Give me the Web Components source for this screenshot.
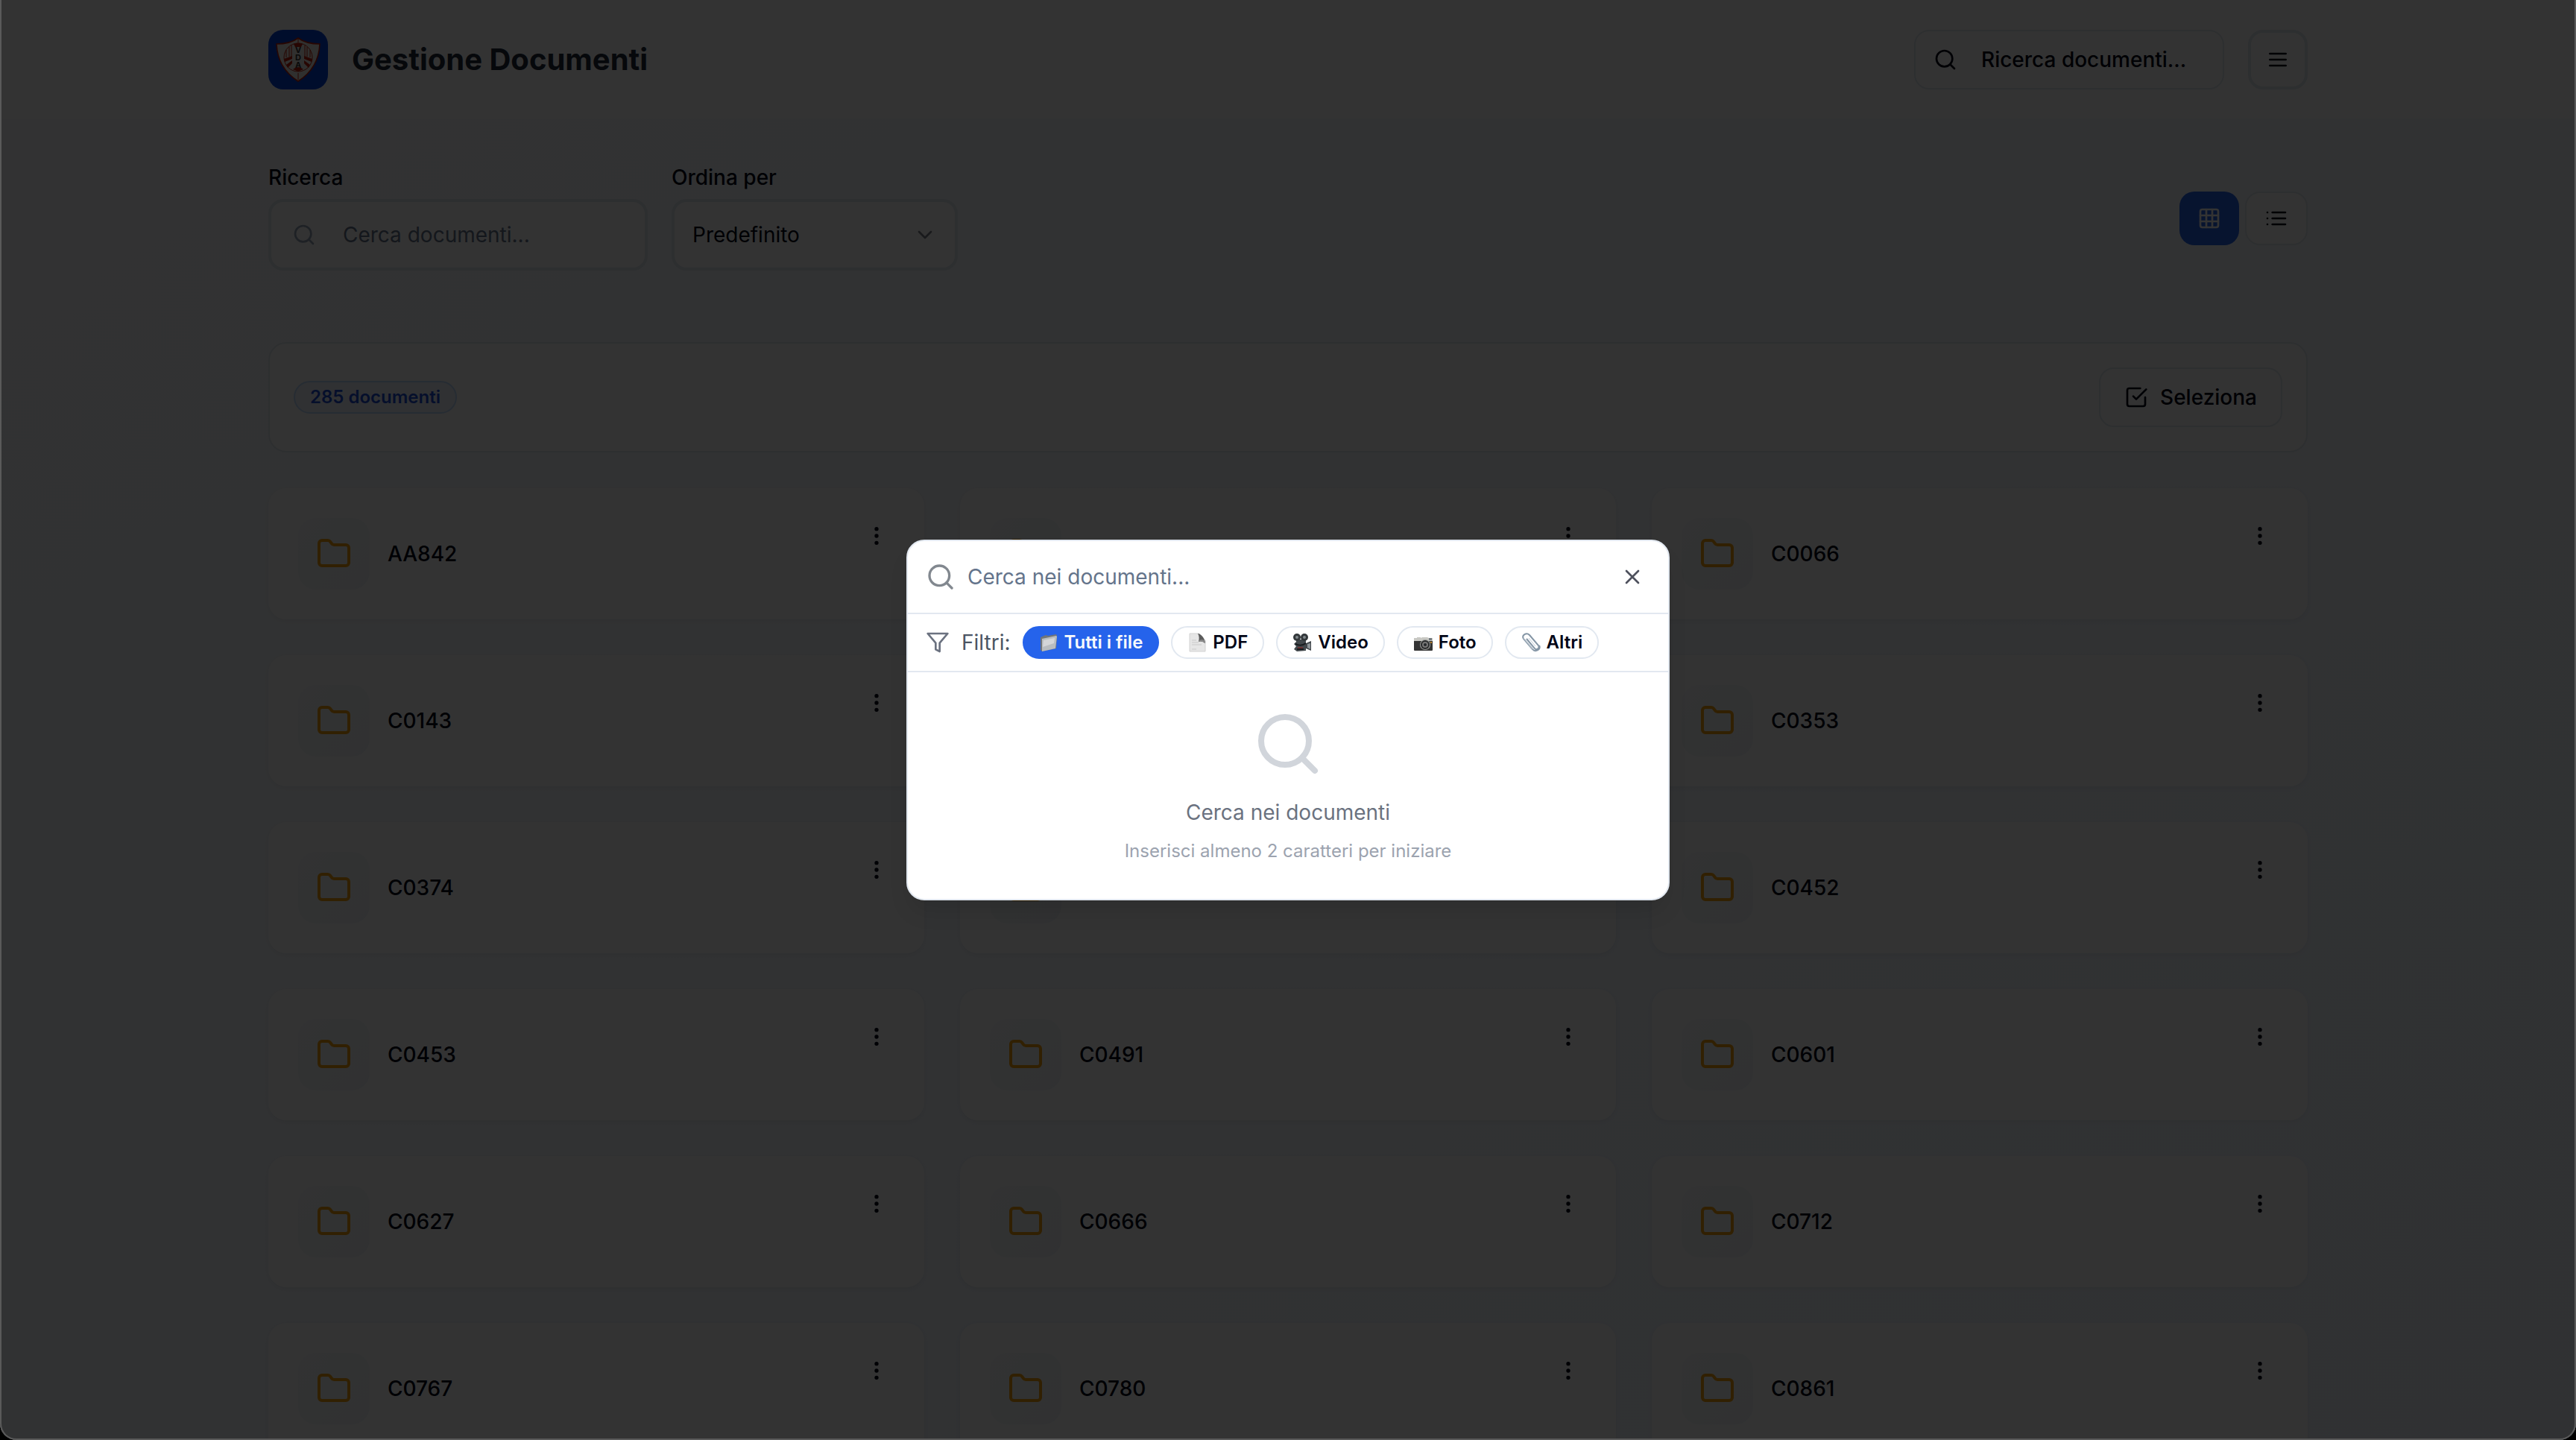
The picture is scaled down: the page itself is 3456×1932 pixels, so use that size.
<!DOCTYPE html>
<html lang="it">
<head>
<meta charset="utf-8">
<title>Gestione Documenti</title>
<style>
  html, body {
    height: 100%;
    margin: 0;
    overflow: hidden;
  }
  body {
    font-family: Inter, "Liberation Sans", sans-serif;
    font-size: 28px;
    line-height: 40px;
    color: #020617;
    background: #000;
  }
</style>
</head>
<body>
<doc-app>
  <doc-header title-text="Gestione Documenti"></doc-header>
  <doc-toolbar></doc-toolbar>
  <doc-results>285 documenti</doc-results>
  <doc-grid></doc-grid>
  <search-dialog slot="overlay">
    <file-filter icon="folderFile" active>Tutti i file</file-filter>
    <file-filter icon="page">PDF</file-filter>
    <file-filter icon="movie">Video</file-filter>
    <file-filter icon="camera">Foto</file-filter>
    <file-filter icon="clip">Altri</file-filter>
  </search-dialog>
</doc-app>

<script>
(function () {
  const ICONS = {
    search: '<circle cx="11" cy="11" r="8"/><path d="m21 21-4.3-4.3"/>',
    menu: '<path d="M4 12h16M4 6h16M4 18h16"/>',
    chevron: '<path d="m6 9 6 6 6-6"/>',
    grid: '<rect x="3" y="3" width="18" height="18" rx="2"/><path d="M3 9h18M3 15h18M9 3v18M15 3v18"/>',
    list: '<path d="M8 6h13M8 12h13M8 18h13M3 6h.01M3 12h.01M3 18h.01"/>',
    check: '<path d="m9 11 3 3L22 4"/><path d="M21 12v7a2 2 0 0 1-2 2H5a2 2 0 0 1-2-2V5a2 2 0 0 1 2-2h11"/>',
    folder: '<path d="M20 20a2 2 0 0 0 2-2V8a2 2 0 0 0-2-2h-7.9a2 2 0 0 1-1.69-.9L9.6 3.9A2 2 0 0 0 7.93 3H4a2 2 0 0 0-2 2v13a2 2 0 0 0 2 2Z"/>',
    dots: '<circle cx="12" cy="12" r="1"/><circle cx="12" cy="5" r="1"/><circle cx="12" cy="19" r="1"/>',
    close: '<path d="M18 6 6 18M6 6l12 12"/>',
    filter: '<path d="M22 3H2l8 9.46V19l4 2v-8.54L22 3z"/>',
  };

  const PICTURES = {
    folderFile: `
      <path d="M2 6 9 3l3 1 11-2 1 2-1 17-19 4-2-2z" fill="#70757a"/>
      <path d="m4 8 19-4 1 1-2 16-18 4z" fill="#b9bdc0"/>
      <path d="m6 10 15-3-1 7-15 5z" fill="#d4d6d8"/>`,
    page: `
      <path d="M3 1h13l8 9v15H3z" fill="#e6e6e6" stroke="#d2d2d2"/>
      <path d="M14 1c5 1 9 6 10 13-4-3-7-3-9-2 1-4 1-8-1-11z" fill="#5b5b5b"/>
      <path d="M15 12c2-1 5-1 9 2v-3c-3-2-6-2-8-1z" fill="#8b8b8b"/>
      <path d="M6 10h6M6 13h9M6 16h13M6 22h6" stroke="#c9c9c9"/>`,
    movie: `
      <path d="M5 9h13v5l7-3v13l-7-3v3l-12 1-4-3 3-4-3-3 3-3z" fill="#42484c"/>
      <circle cx="6" cy="6" r="5" fill="#33383b"/><circle cx="16" cy="6" r="5" fill="#33383b"/>
      <circle cx="6" cy="6" r="2" fill="#81888b"/><circle cx="16" cy="6" r="2" fill="#81888b"/>
      <path d="M4 15c6 3 10 2 14-1M6 22h9" stroke="#191c1f" stroke-width="2" fill="none"/>
      <path d="M7 20h7" stroke="#6b3335" stroke-width="2"/>
      <path d="m20 15 4-1v8l-4-2z" fill="#8e9599"/>`,
    camera: `
      <rect x="1" y="7" width="25" height="17" rx="1" fill="#343434"/>
      <path d="M1 7h4V6h5v1l2-1h7l2 1h5v4H1z" fill="#c8c8c3"/>
      <rect x="21" y="7" width="4" height="3" fill="#747b81"/>
      <circle cx="16" cy="16" r="7" fill="#9a9c9a"/><circle cx="16" cy="16" r="6" fill="#292a2b"/>
      <circle cx="16" cy="16" r="4" fill="#777"/><circle cx="16" cy="16" r="2" fill="#25282b"/>
      <circle cx="24" cy="13" r="1" fill="#eea52e"/>`,
    clip: `
      <path d="m7 8 11 13c2 3 7 0 5-4L11 3C7-1 0 3 3 8l12 14c4 5 12 0 9-5" fill="none" stroke="#8495a5" stroke-width="2"/>
      <path d="M10 7 19 18M3 7l12 15" fill="none" stroke="#c2ccd5"/>`,
  };

  const FOLDERS = [
    "AA842", "", "C0066",
    "C0143", "", "C0353",
    "C0374", "", "C0452",
    "C0453", "C0491", "C0601",
    "C0627", "C0666", "C0712",
    "C0767", "C0780", "C0861",
  ];

  const icon = (name, size = 32) =>
    `<svg class="icon" width="${size}" height="${size}" viewBox="0 0 24 24" fill="none" stroke="currentColor"
      stroke-width="2" stroke-linecap="round" stroke-linejoin="round" aria-hidden="true">${ICONS[name]}</svg>`;

  const base = `
    *, *::before, *::after { box-sizing: border-box; }
    svg { display: block; flex: none; }
    button, input, select { font: inherit; color: inherit; margin: 0; }
    .btn {
      display: inline-flex;
      align-items: center;
      justify-content: center;
      height: 80px;
      padding: 0;
      font-weight: 500;
      background: #fff;
      border: 2px solid #e2e8f0;
      border-radius: 20px;
    }
  `;

  function define(name, html, setup) {
    const template = document.createElement("template");
    customElements.define(
      name,
      class extends HTMLElement {
        constructor() {
          super();
          template.innerHTML = typeof html === "function" ? html(this) : html;
          this.attachShadow({ mode: "open" }).appendChild(template.content.cloneNode(true));
          if (setup) setup(this, this.shadowRoot);
        }
      }
    );
  }

  define("doc-app", `
    <style>
      ${base}
      :host {
        display: block;
        position: relative;
        height: 100vh;
        overflow: hidden;
        border-radius: 0 0 22px 22px;
        background: linear-gradient(to bottom right, #f8fafc, #eff6ff);
      }
      main {
        display: flex;
        flex-direction: column;
        gap: 48px;
        max-width: 2800px;
        margin: 0 auto;
        padding: 0 32px;
      }
      .frame {
        position: absolute;
        inset: 0;
        border: 2px solid #5a5a5a;
        border-top: 0;
        border-radius: inherit;
      }
    </style>
    <main><slot></slot></main>
    <slot name="overlay"></slot>
    <div class="frame"></div>
  `);

  define("doc-header", (el) => `
    <style>
      ${base}
      :host {
        display: flex;
        align-items: center;
        gap: 32px;
        height: 159px;
        background: #fff;
        box-shadow: 0 0 0 100vmax #fff;
        clip-path: inset(0 -100vmax);
      }
      h1 {
        flex: 1;
        margin: 0;
        font-size: 40px;
        line-height: 56px;
        font-weight: 700;
        color: #1e293b;
      }
      .logo {
        width: 80px;
        height: 80px;
        border-radius: 20px;
        background: #0041d9;
      }
      .search {
        justify-content: flex-start;
        gap: 32px;
        width: 416px;
        padding: 0 24px;
      }
      .menu {
        width: 80px;
        border-width: 4px;
      }
    </style>
    <svg class="logo" viewBox="0 0 80 80" aria-hidden="true">
      <path d="M40 11c8 6 18 8 29 8-1 22-10 38-29 50C21 57 12 41 11 19c11 0 21-2 29-8z" fill="#f0eee8" stroke="#c2200c" stroke-width="1.6"/>
      <circle cx="40" cy="37" r="19" fill="#f0eee8" stroke="#c2200c"/>
      <path d="M40 12v5M40 58v9M24 27v10M28 23v13M31 21v15M49 21v15M52 23v13M56 27v10" stroke="#c2200c"/>
      <path d="M34 19q6-3 12 0l-2 4h-8zM33 53q7-6 14 0l-7 3z" fill="#c2200c"/>
      <path d="m21 39 11-4v4l-10 4zM24 47l8-6v4l-6 6zM59 39l-11-4v4l10 4zM56 47l-8-6v4l6 6z" fill="#c2200c"/>
      <g font-size="11" font-weight="700" text-anchor="middle" fill="#333">
        <text x="40" y="31">V</text><text x="40" y="41">D</text><text x="40" y="51">A</text>
      </g>
    </svg>
    <h1>${el.getAttribute("title-text")}</h1>
    <button class="btn search" type="button">${icon("search")}Ricerca documenti...</button>
    <button class="btn menu" type="button" aria-label="Menu">${icon("menu")}</button>
  `);

  define("doc-toolbar", `
    <style>
      ${base}
      :host {
        display: flex;
        align-items: center;
        gap: 32px;
        margin: 16px 0 48px;
      }
      label {
        display: block;
        margin-bottom: 14px;
        line-height: 30px;
        font-weight: 500;
      }
      .box {
        display: grid;
        align-items: center;
      }
      .box > * { grid-area: 1 / 1; }
      .box .icon { pointer-events: none; }
      input, select {
        width: 100%;
        height: 96px;
        padding: 0 24px;
        background: #fff;
        border: 4px solid #e2e8f0;
        border-radius: 20px;
        outline: none;
        appearance: none;
      }
      input { padding-left: 96px; }
      input::placeholder { color: #64748b; opacity: 1; }
      .query { width: 509px; }
      .query .icon { margin-left: 32px; color: #94a3b8; }
      .sort { width: 384px; }
      .sort .icon {
        justify-self: end;
        margin-right: 28px;
        opacity: .5;
      }
      .views {
        display: flex;
        gap: 8px;
        margin-left: auto;
      }
      .views .btn { width: 84px; height: 72px; }
      .views .on {
        width: 80px;
        color: #fff;
        background: #2563eb;
        border: 0;
      }
    </style>
    <div class="query">
      <label for="query">Ricerca</label>
      <div class="box"><input id="query" type="text" placeholder="Cerca documenti...">${icon("search")}</div>
    </div>
    <div class="sort">
      <label for="sort">Ordina per</label>
      <div class="box"><select id="sort"><option>Predefinito</option></select>${icon("chevron")}</div>
    </div>
    <div class="views">
      <button class="btn on" type="button" aria-label="Griglia">${icon("grid")}</button>
      <button class="btn" type="button" aria-label="Elenco">${icon("list")}</button>
    </div>
  `);

  define("doc-results", `
    <style>
      ${base}
      :host {
        display: flex;
        align-items: center;
        justify-content: space-between;
        padding: 32px;
        background: rgba(255, 255, 255, .8);
        border: 2px solid #e2e8f0;
        border-radius: 24px;
      }
      .badge {
        padding: 0 20px;
        border: 2px solid #bfdbfe;
        border-radius: 22px;
        background: #eff6ff;
        color: #1d4ed8;
        font-size: 24px;
        font-weight: 600;
      }
      .btn { gap: 16px; padding: 0 32px; }
    </style>
    <span class="badge"><slot></slot></span>
    <button class="btn" type="button">${icon("check")}Seleziona</button>
  `);

  define("folder-card", `
    <style>
      ${base}
      :host {
        display: flex;
        align-items: center;
        gap: 24px;
        height: 176px;
        padding: 32px;
        box-sizing: border-box;
        background: rgba(255, 255, 255, .8);
        border-radius: 24px;
        box-shadow: 0 2px 6px rgba(0, 0, 0, .06);
      }
      .tile {
        display: grid;
        place-items: center;
        width: 96px;
        height: 96px;
        margin-left: 8px;
        border-radius: 24px;
        background: linear-gradient(to bottom right, #f8fafc, #f1f5f9);
        color: #f59e0b;
      }
      .name { flex: 1; font-weight: 500; }
      button {
        display: grid;
        place-items: center;
        align-self: flex-start;
        width: 64px;
        height: 64px;
        padding: 0;
        border: 0;
        background: none;
      }
    </style>
    <div class="tile">${icon("folder", 48)}</div>
    <span class="name"><slot></slot></span>
    <button type="button" aria-label="Azioni">${icon("dots")}</button>
  `);

  define("doc-grid", `
    <style>
      :host {
        display: grid;
        grid-template-columns: repeat(3, 1fr);
        gap: 48px;
      }
    </style>
  `, (el, root) => {
    FOLDERS.forEach((name) => {
      const card = document.createElement("folder-card");
      card.textContent = name;
      root.appendChild(card);
    });
  });

  define("file-filter", (el) => `
    <style>
      ${base}
      :host { display: block; }
      button {
        display: flex;
        align-items: center;
        gap: 8px;
        height: 44px;
        padding: 0 20px;
        border: 2px solid #e2e8f0;
        border-radius: 22px;
        background: #fff;
        font-size: 24px;
        line-height: 32px;
        font-weight: 600;
        white-space: nowrap;
      }
      :host([active]) button {
        color: #f8fafc;
        background: #2563eb;
        border-color: #2563eb;
      }
    </style>
    <button type="button">
      <svg width="26" height="26" viewBox="0 0 26 26" aria-hidden="true">${PICTURES[el.getAttribute("icon")]}</svg>
      <span><slot></slot></span>
    </button>
  `);

  define("search-dialog", `
    <style>
      ${base}
      :host {
        position: absolute;
        inset: 0;
        display: grid;
        place-items: center;
        background: rgba(0, 0, 0, .8);
      }
      .panel {
        width: 1024px;
        border: 2px solid #e2e8f0;
        border-radius: 24px;
        background: #fff;
        box-shadow: 0 20px 30px -6px rgba(0, 0, 0, .1);
        overflow: hidden;
      }
      .row {
        display: flex;
        align-items: center;
        gap: 16px;
        padding: 0 24px;
        border-bottom: 2px solid #e2e8f0;
      }
      .query { height: 98px; }
      .query .icon { color: #82888f; }
      input {
        flex: 1;
        height: 80px;
        padding: 0;
        border: 0;
        outline: none;
        background: none;
      }
      input::placeholder { color: #64748b; opacity: 1; }
      .close {
        display: grid;
        place-items: center;
        width: 48px;
        height: 48px;
        padding: 0;
        border: 0;
        background: none;
      }
      .query .close .icon { color: #4e515d; }
      .filters {
        height: 78px;
        color: #4b5563;
      }
      .filters > .icon { color: #6b7280; }
      ::slotted(file-filter) { color: #020617; }
      .empty {
        padding: 48px;
        text-align: center;
        color: #6b7280;
      }
      .empty .icon {
        margin: 0 auto 24px;
        color: #d1d5db;
      }
      p { margin: 0 0 16px; }
      small {
        display: block;
        font-size: 24px;
        line-height: 32px;
        color: #9ca3af;
      }
    </style>
    <section class="panel" role="dialog" aria-label="Ricerca">
      <div class="row query">
        ${icon("search", 40)}
        <input type="text" placeholder="Cerca nei documenti..." aria-label="Cerca nei documenti">
        <button class="close" type="button" aria-label="Chiudi">${icon("close")}</button>
      </div>
      <div class="row filters">
        ${icon("filter")}<span>Filtri:</span>
        <slot></slot>
      </div>
      <div class="empty">
        ${icon("search", 96)}
        <p>Cerca nei documenti</p>
        <small>Inserisci almeno 2 caratteri per iniziare</small>
      </div>
    </section>
  `);
})();
</script>
</body>
</html>
